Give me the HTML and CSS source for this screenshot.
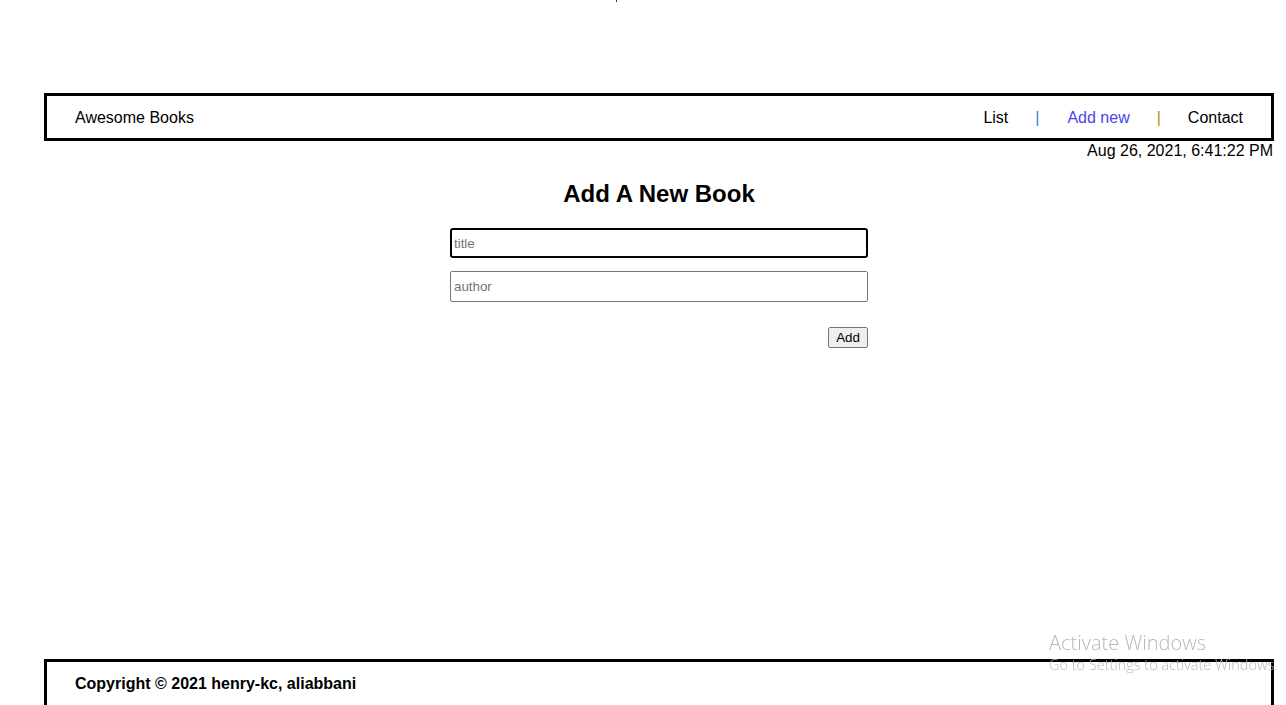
FILE: index.html
```html
<!DOCTYPE html>
<html lang="en">
<head>
<meta charset="utf-8">
<title>Awesome Books</title>
<link rel="stylesheet" href="styles.css">
</head>
<body>
<span class="dot"></span>
<div class="page">
  <header class="header">
    <span class="brand">Awesome Books</span>
    <nav class="nav">
      <a class="nav-link" href="#">List</a>
      <span class="sep sep-blue">|</span>
      <a class="nav-link active" href="#">Add new</a>
      <span class="sep sep-orange">|</span>
      <a class="nav-link" href="#">Contact</a>
    </nav>
  </header>
  <div class="date">Aug 26, 2021, 6:41:22 PM</div>
  <main class="main">
    <h2 class="title">Add A New Book</h2>
    <form class="form">
      <input class="field focused" type="text" placeholder="title">
      <input class="field" type="text" placeholder="author">
      <div class="actions"><button class="btn" type="button">Add</button></div>
    </form>
  </main>
  <footer class="footer">
    <span class="copy">Copyright © 2021 henry-kc, aliabbani</span>
  </footer>
</div>
<div class="watermark">
  <div class="wm-title">Activate Windows</div>
  <div class="wm-sub">Go to Settings to activate Windows.</div>
</div>
</body>
</html>
```
FILE: styles.css
```css
html, body {
  margin: 0;
  padding: 0;
  background: #fff;
  font-family: "Liberation Sans", Arial, sans-serif;
  color: #000;
}

html {
  overflow: hidden;
}

.dot {
  position: absolute;
  left: 616px;
  top: 0;
  width: 1px;
  height: 2px;
  background: #2020e0;
}

.page {
  display: flex;
  flex-direction: column;
  width: 1230px;
  margin-left: 44px;
  padding-top: 93px;
  min-height: 612px;
}

.header {
  display: flex;
  justify-content: space-between;
  align-items: center;
  height: 42px;
  border: 3px solid #000;
  padding: 0 28px 0 28px;
  font-size: 16px;
}

.brand {
  line-height: 18px;
  padding-top: 1px;
}

.nav {
  display: flex;
  align-items: center;
  gap: 27px;
  padding-top: 1px;
}

.nav-link {
  color: #000;
  text-decoration: none;
  line-height: 18px;
}

.nav-link.active {
  color: #4646ee;
}

.sep {
  line-height: 18px;
}

.sep-blue {
  color: #2f7fd8;
  margin-right: 1px;
}

.sep-orange {
  color: #c8860a;
}

.date {
  text-align: right;
  font-size: 16px;
  line-height: 18px;
  padding-top: 1px;
  padding-right: 1px;
}

.main {
  display: flex;
  flex-direction: column;
  align-items: center;
}

.title {
  margin: 20px 0 0;
  font-size: 24px;
  font-weight: bold;
  line-height: 28px;
}

.form {
  display: flex;
  flex-direction: column;
  width: 418px;
  margin-top: 20px;
  gap: 13px;
}

.field {
  box-sizing: border-box;
  width: 418px;
  height: 31px;
  border: 1px solid #767676;
  border-radius: 2px;
  padding: 0 3px;
  font-family: "Liberation Sans", Arial, sans-serif;
  font-size: 13.33px;
  color: #000;
  outline: none;
  background: #fff;
}

.field::placeholder {
  color: #757575;
}

.field.focused {
  height: 30px;
  border: 2px solid #000;
  border-radius: 3px;
  padding-left: 2px;
}

.actions {
  display: flex;
  justify-content: flex-end;
  margin-top: 12px;
}

.btn {
  box-sizing: border-box;
  width: 40px;
  height: 21px;
  padding: 0;
  border: 1px solid #767676;
  border-radius: 2px;
  background: #efefef;
  font-family: "Liberation Sans", Arial, sans-serif;
  font-size: 13.33px;
  color: #000;
}

.footer {
  margin-top: auto;
  border: 3px solid #000;
  border-bottom: 0;
  height: 30px;
  padding: 13px 28px 0;
  font-size: 16px;
  font-weight: bold;
}

.copy {
  line-height: 18px;
}

.watermark {
  position: fixed;
  left: 1049px;
  top: 629px;
  font-family: "Open Sans", "Noto Sans", sans-serif;
  color: #b8b8b8;
  pointer-events: none;
  white-space: nowrap;
}

.wm-title {
  font-size: 20px;
  line-height: 27px;
  font-weight: 300;
}

.wm-sub {
  font-size: 14.5px;
  line-height: 18px;
  font-weight: 300;
}
```
